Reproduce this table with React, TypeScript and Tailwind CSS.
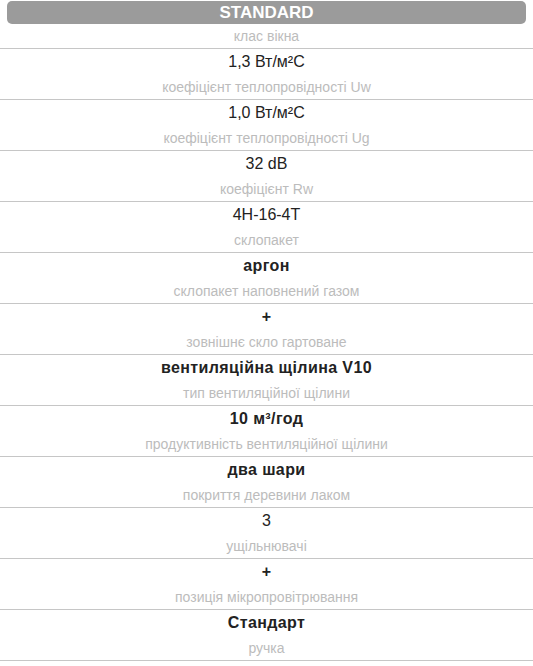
import React from "react";

interface Spec {
  value: string;
  label: string;
  bold?: boolean;
}

const specs: Spec[] = [
  { value: "1,3 Вт/м²С", label: "коефіцієнт теплопровідності Uw" },
  { value: "1,0 Вт/м²С", label: "коефіцієнт теплопровідності Ug" },
  { value: "32 dB", label: "коефіцієнт Rw" },
  { value: "4Н-16-4Т", label: "склопакет" },
  { value: "аргон", label: "склопакет наповнений газом", bold: true },
  { value: "+", label: "зовнішнє скло гартоване", bold: true },
  { value: "вентиляційна щілина V10", label: "тип вентиляційної щілини", bold: true },
  { value: "10 м³/год", label: "продуктивність вентиляційної щілини", bold: true },
  { value: "два шари", label: "покриття деревини лаком", bold: true },
  { value: "3", label: "ущільнювачі" },
  { value: "+", label: "позиція мікропровітрювання", bold: true },
  { value: "Стандарт", label: "ручка", bold: true },
];

export default function App() {
  return (
    <div
      className="w-[533px] bg-white text-center"
      style={{ fontFamily: '"Liberation Sans", Arial, sans-serif' }}
    >
      <div className="pt-[1px] border-b border-[#c6c6c6]">
        <div className="mx-[7px] h-[23px] rounded-[5px] bg-[#9b9b9b] text-[17px] font-bold leading-[23px] text-white">
          STANDARD
        </div>
        <div className="text-[14px] leading-[24px] text-[#bcbcbc]">клас вікна</div>
      </div>

      {specs.map((spec, i) => (
        <div key={spec.label + i} className="border-b border-[#c6c6c6]">
          <div
            className={`text-[16px] leading-[26px] text-[#222] ${
              spec.bold ? "font-bold tracking-[0.4px]" : ""
            }`}
          >
            {spec.value}
          </div>
          <div className="text-[14px] leading-[24px] text-[#bcbcbc]">{spec.label}</div>
        </div>
      ))}
    </div>
  );
}
